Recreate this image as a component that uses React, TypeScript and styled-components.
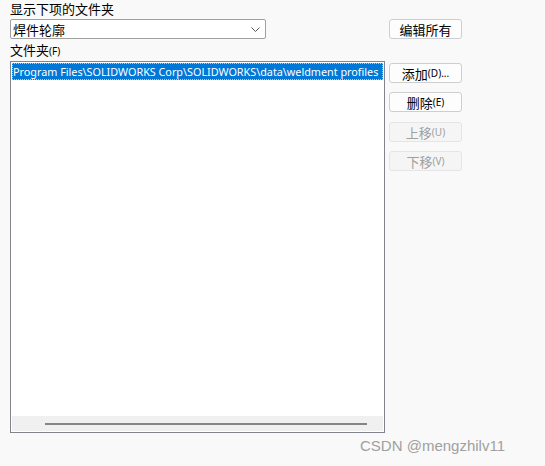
import React from 'react';
import styled, { createGlobalStyle } from 'styled-components';

const GlobalStyle = createGlobalStyle`
html, body {
    margin: 0;
    padding: 0;
    background: #f9f9f9;
}
body {
    width: 545px;
    height: 466px;
    overflow: hidden;
    font-family: "Noto Sans", "Noto Sans CJK SC", sans-serif;
    font-size: 12px;
    color: #000;
}
`;

const Page = styled.div`
position: relative;
display: flex;
gap: 4px;
width: 545px;
height: 466px;
padding-left: 10px;
box-sizing: border-box;
`;

const LeftColumn = styled.div`
display: flex;
flex-direction: column;
width: 375px;
`;

const RightColumn = styled.div`
display: flex;
flex-direction: column;
width: 73px;
padding-top: 19px;
`;

const Label = styled.div<{ top?: string }>`
height: 15px;
line-height: 15px;
margin-top: ${({ top }) => top ?? "0"};
font-size: 13px;
font-family: "Noto Sans CJK SC", sans-serif;
white-space: nowrap;
`;

const Key = styled.span`
font-size: 10px;
font-family: "Noto Sans", sans-serif;
`;

const Combo = styled.div`
display: flex;
align-items: center;
justify-content: space-between;
width: 256px;
height: 20px;
margin-top: 3px;
box-sizing: border-box;
background: #fff;
border: 1px solid #a0a0a0;
border-radius: 2px;
padding-left: 2px;
padding-right: 5px;
font-family: "Noto Sans CJK SC", sans-serif;
font-size: 13px;

svg {
    flex: 0 0 auto;
}
`;

const ListBox = styled.div`
display: flex;
flex-direction: column;
justify-content: space-between;
width: 375px;
height: 372px;
margin-top: 4px;
box-sizing: border-box;
background: #fff;
border: 1px solid #82848d;
padding: 1px;
`;

const SelectedRow = styled.div`
height: 17px;
line-height: 15px;
box-sizing: border-box;
background: #0078d7;
color: #fff;
border: 1px dotted #f0c080;
white-space: nowrap;
overflow: hidden;
font-family: "Noto Sans", sans-serif;
font-size: 10.8px;
`;

const ScrollBar = styled.div`
display: flex;
align-items: center;
height: 15px;
background: #f0f0f0;
padding-left: 33px;
padding-right: 16px;
`;

const Thumb = styled.div`
flex: 1;
height: 2px;
background: #858585;
`;

const Button = styled.div<{ disabled?: boolean, gap?: string }>`
display: flex;
align-items: center;
justify-content: center;
height: 20px;
margin-top: ${({ gap }) => gap ?? "0"};
box-sizing: border-box;
border: 1px solid ${({ disabled }) => disabled ? "#e5e5e5" : "#cecece"};
border-radius: 3px;
background: ${({ disabled }) => disabled ? "#f5f5f5" : "#fdfdfd"};
color: ${({ disabled }) => disabled ? "#a0a0a0" : "#000"};
font-family: "Noto Sans CJK SC", sans-serif;
font-size: 13px;
white-space: nowrap;
`;

const Watermark = styled.div`
position: absolute;
left: 360px;
top: 437px;
font-family: "Liberation Sans", sans-serif;
font-size: 15px;
color: #a0a0a0;
`;

const buttons = [
    { name: "添加", key: "(D)...", gap: "24px" },
    { name: "删除", key: "(E)", gap: "9px" },
    { name: "上移", key: "(U)", gap: "10px", disabled: true },
    { name: "下移", key: "(V)", gap: "9px", disabled: true },
];

const App: React.FC = () => {
    return <>
        <GlobalStyle />
        <Page>
            <LeftColumn>
                <Label top="1px">显示下项的文件夹</Label>
                <Combo>
                    <span>焊件轮廓</span>
                    <svg width="9" height="5" viewBox="0 0 9 5">
                        <path d="M0.5 0.5 L4.5 4.5 L8.5 0.5" fill="none" stroke="#555" strokeWidth="1" />
                    </svg>
                </Combo>
                <Label top="3px">文件夹<Key>(F)</Key></Label>
                <ListBox>
                    <SelectedRow>Program Files\SOLIDWORKS Corp\SOLIDWORKS\data\weldment profiles</SelectedRow>
                    <ScrollBar><Thumb /></ScrollBar>
                </ListBox>
            </LeftColumn>
            <RightColumn>
                <Button>编辑所有</Button>
                {buttons.map(item => (
                    <Button key={item.name} gap={item.gap} disabled={item.disabled}>
                        {item.name}<Key>{item.key}</Key>
                    </Button>
                ))}
            </RightColumn>
            <Watermark>CSDN @mengzhilv11</Watermark>
        </Page>
    </>
}

export default App;
